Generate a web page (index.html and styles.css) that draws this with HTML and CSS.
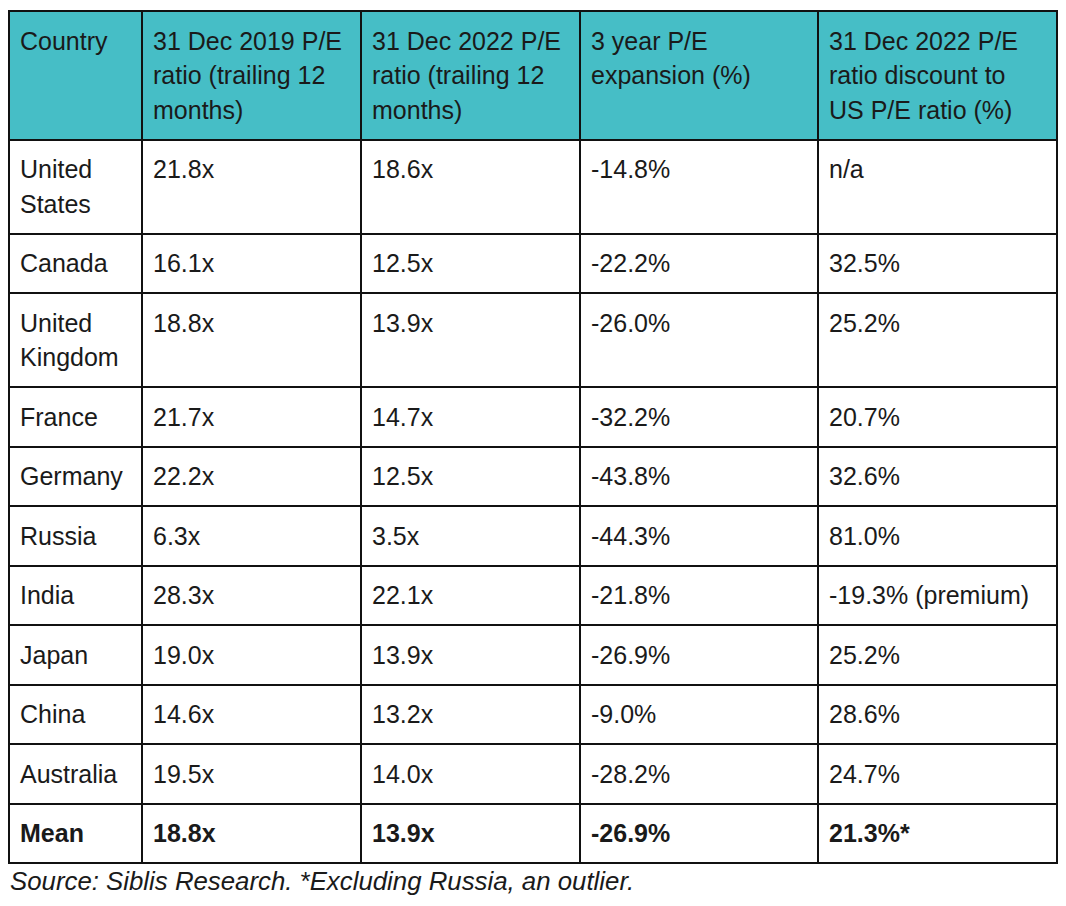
FILE: index.html
```html
<!DOCTYPE html>
<html>
<head>
<meta charset="utf-8">
<link rel="stylesheet" href="styles.css">
</head>
<body>
<table class="pe-table">
  <colgroup>
    <col class="c1"><col class="c2"><col class="c3"><col class="c4"><col class="c5">
  </colgroup>
  <thead>
    <tr>
      <th>Country</th>
      <th>31 Dec 2019 P/E ratio (trailing 12 months)</th>
      <th>31 Dec 2022 P/E ratio (trailing 12 months)</th>
      <th>3 year P/E expansion (%)</th>
      <th>31 Dec 2022 P/E ratio discount to US P/E ratio (%)</th>
    </tr>
  </thead>
  <tbody>
    <tr><td>United States</td><td>21.8x</td><td>18.6x</td><td>-14.8%</td><td>n/a</td></tr>
    <tr><td>Canada</td><td>16.1x</td><td>12.5x</td><td>-22.2%</td><td>32.5%</td></tr>
    <tr><td>United Kingdom</td><td>18.8x</td><td>13.9x</td><td>-26.0%</td><td>25.2%</td></tr>
    <tr><td>France</td><td>21.7x</td><td>14.7x</td><td>-32.2%</td><td>20.7%</td></tr>
    <tr><td>Germany</td><td>22.2x</td><td>12.5x</td><td>-43.8%</td><td>32.6%</td></tr>
    <tr><td>Russia</td><td>6.3x</td><td>3.5x</td><td>-44.3%</td><td>81.0%</td></tr>
    <tr><td>India</td><td>28.3x</td><td>22.1x</td><td>-21.8%</td><td>-19.3% (premium)</td></tr>
    <tr><td>Japan</td><td>19.0x</td><td>13.9x</td><td>-26.9%</td><td>25.2%</td></tr>
    <tr><td>China</td><td>14.6x</td><td>13.2x</td><td>-9.0%</td><td>28.6%</td></tr>
    <tr><td>Australia</td><td>19.5x</td><td>14.0x</td><td>-28.2%</td><td>24.7%</td></tr>
    <tr class="mean"><td>Mean</td><td>18.8x</td><td>13.9x</td><td>-26.9%</td><td>21.3%*</td></tr>
  </tbody>
</table>
<p class="caption">Source: Siblis Research. *Excluding Russia, an outlier.</p>
</body>
</html>
```
FILE: styles.css
```css
html, body {
  background: #ffffff;
}
body {
  margin: 10px 8px;
  font-family: "Liberation Sans", Arial, sans-serif;
  color: #1a1a1a;
}
.pe-table {
  border-collapse: collapse;
  table-layout: fixed;
  width: 1050px;
  font-size: 25px;
  line-height: 34.5px;
}
.c1 { width: 133px; }
.c2 { width: 219px; }
.c3 { width: 219px; }
.c4 { width: 238px; }
.c5 { width: 239px; }
.pe-table th,
.pe-table td {
  border: 2px solid #111111;
  padding: 11.5px 10px;
  text-align: left;
  vertical-align: top;
  font-weight: normal;
}
.pe-table thead th {
  background: #46bec6;
}
.pe-table .mean td {
  font-weight: bold;
}
.caption {
  margin: 0;
  padding-left: 2px;
  font-size: 25.8px;
  line-height: 34px;
  font-style: italic;
  color: #1a1a1a;
}
```
